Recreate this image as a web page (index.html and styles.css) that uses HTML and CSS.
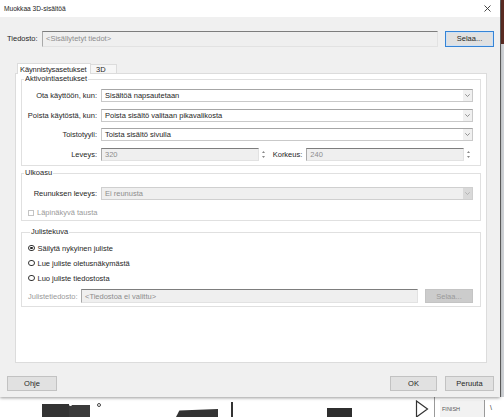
FILE: index.html
```html
<!DOCTYPE html>
<html lang="fi">
<head>
<meta charset="utf-8">
<title>Muokkaa 3D-sisältöä</title>
<link rel="stylesheet" href="styles.css">
</head>
<body>
<div class="screen">
  <div class="top">
    <div class="dialog">
      <div class="titlebar">
        <span class="title">Muokkaa 3D-sisältöä</span>
        <svg class="close" width="7" height="7" viewBox="0 0 7 7"><path d="M0.5 0.5L6.5 6.5M6.5 0.5L0.5 6.5" stroke="#333" stroke-width="0.9" fill="none"/></svg>
      </div>

      <div class="filerow">
        <span class="lbl-file">Tiedosto:</span>
        <div class="field dis file-field">&lt;Sisällytetyt tiedot&gt;</div>
        <div class="btn btn-default">Selaa...</div>
      </div>

      <div class="tabs">
        <div class="tab active">Käynnistysasetukset</div>
        <div class="tab">3D</div>
      </div>

      <div class="panel">
        <fieldset class="group g1">
          <legend>Aktivointiasetukset</legend>
          <div class="form">
            <span class="lbl">Ota käyttöön, kun:</span>
            <div class="combo"><span class="val">Sisältöä napsautetaan</span><span class="arrow"><svg width="5" height="3" viewBox="0 0 5 3"><path d="M0.3 0.3L2.5 2.5L4.7 0.3" stroke="#777" stroke-width="0.8" fill="none"/></svg></span></div>
            <span class="lbl">Poista käytöstä, kun:</span>
            <div class="combo"><span class="val">Poista sisältö valitaan pikavalikosta</span><span class="arrow"><svg width="5" height="3" viewBox="0 0 5 3"><path d="M0.3 0.3L2.5 2.5L4.7 0.3" stroke="#777" stroke-width="0.8" fill="none"/></svg></span></div>
            <span class="lbl">Toistotyyli:</span>
            <div class="combo"><span class="val">Toista sisältö sivulla</span><span class="arrow"><svg width="5" height="3" viewBox="0 0 5 3"><path d="M0.3 0.3L2.5 2.5L4.7 0.3" stroke="#777" stroke-width="0.8" fill="none"/></svg></span></div>
            <span class="lbl">Leveys:</span>
            <div class="dims">
              <div class="field dis num">320</div>
              <span class="spin"><svg width="5" height="11" viewBox="0 0 5 11"><path d="M2.5 2L4 4H1Z M2.5 9L4 7H1Z" fill="#888"/></svg></span>
              <span class="lbl-k">Korkeus:</span>
              <div class="field dis num">240</div>
              <span class="spin"><svg width="5" height="11" viewBox="0 0 5 11"><path d="M2.5 2L4 4H1Z M2.5 9L4 7H1Z" fill="#888"/></svg></span>
            </div>
          </div>
        </fieldset>

        <fieldset class="group g2">
          <legend>Ulkoasu</legend>
          <div class="form">
            <span class="lbl">Reunuksen leveys:</span>
            <div class="combo cdis"><span class="val">Ei reunusta</span><span class="arrow"><svg width="5" height="3" viewBox="0 0 5 3"><path d="M0.3 0.3L2.5 2.5L4.7 0.3" stroke="#aaa" stroke-width="0.8" fill="none"/></svg></span></div>
          </div>
          <div class="check"><span class="box"></span><span class="gtext">Läpinäkyvä tausta</span></div>
        </fieldset>

        <fieldset class="group g3">
          <legend>Julistekuva</legend>
          <div class="radios">
            <div class="radio"><span class="dot on"></span><span>Säilytä nykyinen juliste</span></div>
            <div class="radio"><span class="dot"></span><span>Lue juliste oletusnäkymästä</span></div>
            <div class="radio"><span class="dot"></span><span>Luo juliste tiedostosta</span></div>
          </div>
          <div class="posterrow">
            <span class="gtext plbl">Julistetiedosto:</span>
            <div class="field dis pfield">&lt;Tiedostoa ei valittu&gt;</div>
            <div class="btn bdis">Selaa...</div>
          </div>
        </fieldset>
      </div>

      <div class="footer">
        <div class="btn b-ohje">Ohje</div>
        <div class="spacer"></div>
        <div class="btn b-ok">OK</div>
        <div class="btn b-cancel">Peruuta</div>
      </div>
    </div>
    <div class="edge"><div class="edge-top"></div></div>
  </div>

  <div class="backdrop">
    <div class="shape s1"></div>
    <div class="shape s1b"></div>
    <div class="knob k1"></div>
    <div class="knob k2"></div>
    <div class="shape s2"></div>
    <div class="shape s3"></div>
    <div class="shape s4"></div>
    <svg class="chev" width="14" height="18" viewBox="0 0 14 18"><path d="M1.5 1V17L12.5 9Z" stroke="#333" stroke-width="1.2" fill="#fff"/></svg>
    <div class="vline"></div>
    <div class="finish">FINISH</div>
    <div class="slash">\</div>
  </div>
</div>
</body>
</html>
```

FILE: styles.css
```css
* { box-sizing: border-box; }

html, body {
  margin: 0;
  padding: 0;
  background: #fff;
}

body {
  font-family: "Liberation Sans", Arial, sans-serif;
  font-size: 7.5px;
  color: #262626;
}

.screen {
  width: 504px;
  height: 417px;
  position: relative;
  overflow: hidden;
  background: #fff;
}

.top {
  display: flex;
  height: 397px;
}

.dialog {
  width: 500px;
  height: 397px;
  background: #f0f0f0;
  display: flex;
  flex-direction: column;
  box-shadow: 0 1px 3px rgba(0, 0, 0, 0.4);
  position: relative;
  z-index: 2;
}

.edge {
  width: 4px;
  height: 397px;
  background: #cfd2d6;
  border-left: 1px solid #6a6a6a;
}

.edge-top {
  height: 44px;
  background: #5b2b22;
}

/* Title bar */
.titlebar {
  height: 17px;
  background: #fff;
  display: flex;
  align-items: center;
  justify-content: space-between;
  padding-left: 4px;
  padding-right: 9px;
}

.title {
  font-size: 6.6px;
  color: #222;
}

/* File row */
.filerow {
  margin-top: 13px;
  height: 17px;
  display: flex;
  align-items: center;
  padding-left: 7px;
}

.lbl-file {
  width: 35px;
}

.field {
  height: 16px;
  display: flex;
  align-items: center;
  padding-left: 3px;
  white-space: nowrap;
  overflow: hidden;
}

.dis {
  background: #efefef;
  color: #8d8d8d;
  border-top: 1px solid #7d7d7d;
  border-left: 1px solid #a9a9a9;
  border-right: 1px solid #e2e2e2;
  border-bottom: 1px solid #e2e2e2;
}

.file-field {
  width: 396px;
}

.btn {
  height: 16px;
  display: flex;
  align-items: center;
  justify-content: center;
  background: #e1e1e1;
  border: 1px solid #c2c2c2;
  color: #262626;
}

.btn-default {
  width: 49px;
  margin-left: 7px;
  border: 1px solid #3584d6;
  box-shadow: inset 0 0 0 1px #cfe1f4;
}

/* Tabs */
.tabs {
  margin-top: 16px;
  margin-left: 17px;
  height: 10px;
  display: flex;
  align-items: flex-end;
  position: relative;
  z-index: 1;
}

.tab {
  height: 9px;
  display: flex;
  align-items: center;
  padding: 0 5px;
  background: #f6f6f6;
  border: 1px solid #dcdcdc;
  border-bottom: none;
  border-left: none;
  width: 26px;
  font-size: 7.5px;
  white-space: nowrap;
}

.tab.active {
  width: 74px;
  height: 11px;
  margin-bottom: -1px;
  padding: 0 0 0 2px;
  background: #fff;
  border-left: 1px solid #dcdcdc;
  letter-spacing: -0.1px;
}

/* Panel */
.panel {
  margin-left: 15px;
  width: 472px;
  height: 290px;
  background: #fff;
  border: 1px solid #dcdcdc;
  padding: 0 5px;
}

.group {
  margin: 0;
  min-width: 0;
  border: 1px solid #e0e0e0;
}

.group legend {
  margin-left: 2px;
  padding: 0 1px;
  line-height: 10px;
  height: 10px;
}

.g1 {
  padding: 5px 7px 4px 0;
}

.g2 {
  margin-top: 2.5px;
  padding: 9px 7px 2px 0;
}

.g3 {
  margin-top: 6.5px;
  padding: 6px 7px 3px 6px;
}

.form {
  display: grid;
  grid-template-columns: 75px 1fr;
  grid-auto-rows: 13px;
  column-gap: 4px;
  row-gap: 6.5px;
}

.lbl {
  text-align: right;
  align-self: center;
  white-space: nowrap;
}

.combo {
  height: 13px;
  display: flex;
  align-items: center;
  background: #fff;
  border: 1px solid #c9c9c9;
  border-top-color: #a6a6a6;
}

.combo .val {
  flex: 1;
  padding-left: 3px;
  white-space: nowrap;
}

.combo .arrow {
  width: 9px;
  height: 11px;
  display: flex;
  align-items: center;
  justify-content: center;
  background: #f0f0f0;
}

.combo.cdis {
  background: #efefef;
  color: #8d8d8d;
  border-color: #cfcfcf;
}

.combo.cdis .arrow {
  background: #d9d9d9;
}

.dims {
  display: flex;
  align-items: center;
  height: 13px;
}

.num {
  height: 13px;
  flex: 1;
}

.spin {
  width: 9px;
  height: 13px;
  display: flex;
  align-items: center;
  justify-content: center;
}

.lbl-k {
  margin: 0 4px 0 5px;
}

/* Checkbox */
.check {
  margin-top: 7.5px;
  margin-left: 6px;
  height: 10px;
  display: flex;
  align-items: center;
  gap: 3px;
}

.box {
  width: 6px;
  height: 6px;
  border: 1px solid #c4c4c4;
  background: #fff;
}

.gtext {
  color: #9a9a9a;
}

/* Radios */
.radios {
  display: flex;
  flex-direction: column;
  gap: 5px;
}

.radio {
  height: 10px;
  display: flex;
  align-items: center;
  gap: 3px;
}

.dot {
  width: 6.5px;
  height: 6.5px;
  border-radius: 50%;
  border: 1px solid #333;
  background: #fff;
  display: flex;
  align-items: center;
  justify-content: center;
}

.dot.on::after {
  content: "";
  width: 2.6px;
  height: 2.6px;
  border-radius: 50%;
  background: #222;
}

.posterrow {
  margin-top: 6px;
  height: 14px;
  display: flex;
  align-items: center;
}

.plbl {
  width: 49px;
  margin-right: 4px;
  white-space: nowrap;
}

.pfield {
  height: 14px;
  flex: 1;
}

.bdis {
  width: 48px;
  height: 14px;
  margin-left: 7px;
  background: #cccccc;
  border-color: #c4c4c4;
  color: #9a9a9a;
}

/* Footer */
.footer {
  margin-top: 13px;
  height: 15px;
  display: flex;
  align-items: center;
  padding: 0 6px 0 7px;
}

.footer .btn {
  height: 15px;
}

.b-ohje { width: 50px; }
.spacer { flex: 1; }
.b-ok { width: 47px; }
.b-cancel { width: 49px; margin-left: 8px; }

/* Backdrop (application canvas behind dialog) */
.backdrop {
  position: relative;
  height: 20px;
}

.shape {
  position: absolute;
  background: #333;
}

.s1 { left: 42px; top: 7px; width: 27px; height: 13px; }
.s1b { left: 69px; top: 8px; width: 21px; height: 12px; background: #3a3a3a; }
.s2 { left: 176px; top: 12px; width: 42px; height: 8px; clip-path: polygon(8% 20%, 100% 0, 100% 100%, 0 100%); }
.s3 { left: 231px; top: 5px; width: 2px; height: 15px; }
.s4 { left: 327px; top: 11px; width: 25px; height: 9px; background: #2e2e2e; }

.knob {
  position: absolute;
  border-radius: 50%;
}

.k1 { left: 69px; top: 6px; width: 3px; height: 3px; background: #fff; }
.k2 { left: 97px; top: 6px; width: 4px; height: 4px; border: 1px solid #444; background: #fff; }

.chev {
  position: absolute;
  left: 415px;
  top: 3px;
}

.vline {
  position: absolute;
  left: 434px;
  top: 0;
  width: 1px;
  height: 20px;
  background: #9a9a9a;
}

.finish {
  position: absolute;
  left: 440px;
  top: 3px;
  width: 45px;
  height: 17px;
  padding-left: 2px;
  display: flex;
  align-items: center;
  font-size: 5.5px;
  color: #555;
  background: #f2f2f2;
  border-right: 1px solid #9a9a9a;
}

.slash {
  position: absolute;
  left: 490px;
  top: 7px;
  font-size: 7px;
  color: #333;
}
```
